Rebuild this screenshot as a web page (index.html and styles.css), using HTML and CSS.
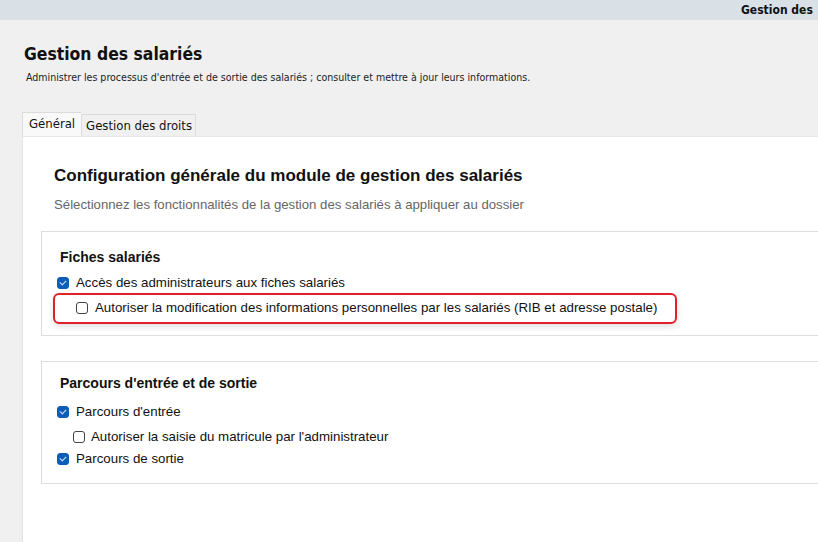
FILE: index.html
```html
<!DOCTYPE html>
<html lang="fr">
<head>
<meta charset="utf-8">
<title>Gestion des salariés</title>
<link rel="stylesheet" href="styles.css">
</head>
<body>
<div class="topbar"><span class="topbar-title">Gestion des</span></div>
<div class="page">
  <header class="page-head">
    <h1 class="page-title">Gestion des salariés</h1>
    <p class="page-desc">Administrer les processus d'entrée et de sortie des salariés ; consulter et mettre à jour leurs informations.</p>
  </header>
  <div class="tabs">
    <div class="tab tab-active">Général</div>
    <div class="tab">Gestion des droits</div>
  </div>
  <div class="panel">
    <h2 class="panel-title">Configuration générale du module de gestion des salariés</h2>
    <p class="panel-sub">Sélectionnez les fonctionnalités de la gestion des salariés à appliquer au dossier</p>

    <section class="group group-1">
      <h3 class="group-title">Fiches salariés</h3>
      <label class="opt"><span class="cb cb-on"></span>Accès des administrateurs aux fiches salariés</label>
      <div class="highlight">
        <label class="opt"><span class="cb"></span>Autoriser la modification des informations personnelles par les salariés (RIB et adresse postale)</label>
      </div>
    </section>

    <section class="group group-2">
      <h3 class="group-title">Parcours d'entrée et de sortie</h3>
      <label class="opt"><span class="cb cb-on"></span>Parcours d'entrée</label>
      <label class="opt opt-sub"><span class="cb"></span>Autoriser la saisie du matricule par l'administrateur</label>
      <label class="opt"><span class="cb cb-on"></span>Parcours de sortie</label>
    </section>
  </div>
</div>
</body>
</html>
```
FILE: styles.css
```css
html, body {
  margin: 0;
  height: 100%;
  overflow: hidden;
}
body {
  background: #f0f0f0;
  font-family: "Liberation Sans", Arial, sans-serif;
  color: #111;
  display: flex;
  flex-direction: column;
}
.topbar {
  height: 20px;
  background: #d9e1e6;
  display: flex;
  align-items: center;
  padding-left: 741px;
  white-space: nowrap;
  overflow: hidden;
}
.topbar-title {
  font-family: "DejaVu Sans Condensed", "DejaVu Sans", sans-serif;
  font-weight: bold;
  font-size: 12px;
  color: #111;
}
.page {
  flex: 1;
  display: flex;
  flex-direction: column;
  padding-left: 22px;
}
.page-head {
  padding: 23px 0 0 2px;
  height: 92px;
  box-sizing: border-box;
}
.page-title {
  margin: 0;
  font-family: "DejaVu Sans Condensed", "DejaVu Sans", sans-serif;
  font-weight: bold;
  font-size: 17.4px;
  line-height: 22px;
  color: #111;
}
.page-desc {
  margin: 5px 0 0 2px;
  font-family: "DejaVu Sans Condensed", "DejaVu Sans", sans-serif;
  font-size: 10.55px;
  line-height: 14px;
  color: #222;
}
.tabs {
  display: flex;
  align-items: flex-end;
  height: 24px;
}
.tab {
  font-family: "DejaVu Sans Condensed", "DejaVu Sans", sans-serif;
  font-size: 13px;
  height: 22px;
  line-height: 22px;
  padding: 0 3px 0 4px;
  background: #f0f0f0;
  border: 1px solid #dcdcdc;
  border-bottom: none;
  box-sizing: border-box;
}
.tab-active {
  height: 24px;
  line-height: 22px;
  background: #f9f9f9;
  padding: 0 6px;
  border-right: none;
}
.panel {
  flex: 1;
  background: #fff;
  border-left: 1px solid #e4e4e4;
  border-top: 1px solid #e8e8e8;
  padding: 28px 0 0 31px;
}
.panel-title {
  margin: 0;
  font-size: 17px;
  line-height: 22px;
  font-weight: bold;
  color: #111;
}
.panel-sub {
  margin: 8px 0 0;
  font-size: 13.2px;
  line-height: 20px;
  color: #666;
}
.group {
  margin: 16px 0 0 -13px;
  border: 1px solid #dedede;
  border-right: none;
  padding: 15px 0 13px 15px;
}
.group-1 {
  padding-bottom: 11px;
}
.group-2 {
  margin-top: 25px;
  padding-top: 11px;
}
.group-title {
  margin: 0 0 5px 3px;
  font-size: 14px;
  line-height: 20px;
  font-weight: bold;
  color: #111;
}
.group-2 .group-title {
  margin-bottom: 8px;
}
.opt {
  display: flex;
  align-items: center;
  font-size: 13.3px;
  line-height: 22px;
  color: #111;
  gap: 7px;
}
.opt-sub {
  margin-top: 3px;
  padding-left: 16px;
  gap: 6px;
}
.cb {
  width: 12px;
  height: 12px;
  box-sizing: border-box;
  border: 1px solid #444;
  border-radius: 3px;
  background: #fff;
  flex: none;
  position: relative;
}
.cb-on {
  background: #0d5cb6;
  border-color: #0d5cb6;
}
.cb-on::after {
  content: "";
  position: absolute;
  left: 2px;
  top: 2px;
  width: 5px;
  height: 3px;
  border-left: 1px solid #d6e4f5;
  border-bottom: 1px solid #d6e4f5;
  transform: rotate(-45deg);
}
.highlight {
  margin: -1px 0 0 -4px;
  width: 624px;
  box-sizing: border-box;
  border: 2px solid #e2202c;
  border-radius: 6px;
  padding: 2px 0 3px 21px;
  box-shadow: 0 3px 6px rgba(0,0,0,0.12);
}
```
